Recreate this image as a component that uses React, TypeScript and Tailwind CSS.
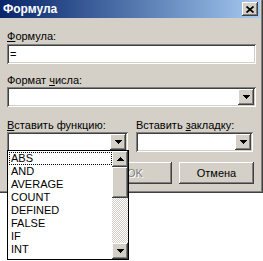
import React from 'react';

const raised =
  'bg-[#d4d0c8] shadow-[inset_-1px_-1px_0_#404040,inset_1px_1px_0_#fff,inset_-2px_-2px_0_#808080,inset_2px_2px_0_#d4d0c8]';
const sunken =
  'bg-white shadow-[inset_1px_1px_0_#808080,inset_-1px_-1px_0_#fff,inset_2px_2px_0_#404040,inset_-2px_-2px_0_#d4d0c8]';

const Arrow: React.FC<{ up?: boolean }> = ({ up }) => (
  <svg width="7" height="4" viewBox="0 0 7 4" shapeRendering="crispEdges">
    <polygon points={up ? '3.5,0 7,4 0,4' : '0,0 7,0 3.5,4'} fill="#000" />
  </svg>
);

const ArrowButton: React.FC<{ up?: boolean }> = ({ up }) => (
  <div className={`w-[16px] h-[16px] flex items-center justify-center ${raised}`}>
    <Arrow up={up} />
  </div>
);

const Combo: React.FC<{ className?: string }> = ({ className }) => (
  <div className={`h-[20px] p-[2px] flex justify-end ${sunken} ${className ?? ''}`}>
    <ArrowButton />
  </div>
);

const functions = ['ABS', 'AND', 'AVERAGE', 'COUNT', 'DEFINED', 'FALSE', 'IF', 'INT'];

export default function App() {
  return (
    <div className="w-[263px] h-[261px] bg-white relative overflow-hidden font-['Liberation_Sans',Arial,sans-serif] text-[11px] text-black">
      <div className="w-[263px] h-[193px] bg-[#d4d0c8] pr-[3px] shadow-[inset_-1px_-1px_0_#404040,inset_-2px_-2px_0_#808080]">
        {/* Title bar */}
        <div className="h-[18px] bg-gradient-to-r from-[#0a246a] to-[#a6caf0] flex items-center justify-between pl-[3px] pr-[2px]">
          <span className="font-bold text-white text-[12px] leading-[18px]">Формула</span>
          <div className={`w-[16px] h-[14px] flex items-center justify-center ${raised}`}>
            <svg width="8" height="7" viewBox="0 0 8 7">
              <path d="M0.5 0.5 L7.5 6.5 M7.5 0.5 L0.5 6.5" stroke="#000" strokeWidth="1.7" />
            </svg>
          </div>
        </div>

        <div className="pl-[7px] pt-[11px]">
          <div className="h-[15px] leading-[15px]">
            <span className="underline">Ф</span>ормула:
          </div>
          <div className={`w-[249px] h-[20px] px-[3px] flex items-center ${sunken}`}>=</div>

          <div className="mt-[9px] h-[14px] leading-[14px]">
            Формат <span className="underline">ч</span>исла:
          </div>
          <Combo className="w-[249px]" />

          <div className="mt-[11px] flex">
            <div className="w-[121px]">
              <div className="h-[14px] leading-[14px]">
                <span className="underline">В</span>ставить функцию:
              </div>
              <Combo />
            </div>
            <div className="ml-[8px] w-[117px]">
              <div className="h-[14px] leading-[14px]">
                Вставить <span className="underline">з</span>акладку:
              </div>
              <Combo />
            </div>
          </div>

          <div className="mt-[10px] pl-[91px] flex gap-[7px]">
            <div className={`w-[74px] h-[22px] flex items-center justify-center text-[#808080] [text-shadow:1px_1px_0_#fff] ${raised}`}>
              OK
            </div>
            <div className={`w-[75px] h-[22px] flex items-center justify-center ${raised}`}>
              Отмена
            </div>
          </div>
        </div>
      </div>

      {/* Dropped-down function list */}
      <div className="absolute left-[7px] top-[150px] w-[122px] h-[110px] bg-white border border-black flex">
        <div className="flex-1 pt-[1px] pl-[1px]">
          {functions.map((f, i) => (
            <div
              key={f}
              className={`h-[13px] leading-[11px] pl-[1px] border border-dotted ${i === 0 ? 'border-black' : 'border-transparent'}`}
            >
              {f}
            </div>
          ))}
        </div>
        <div className="w-[16px] flex flex-col">
          <ArrowButton up />
          <div className={`h-[31px] ${raised}`} />
          <div className="flex-1 bg-[repeating-conic-gradient(#d4d0c8_0_25%,#fff_0_50%)] bg-[length:2px_2px]" />
          <ArrowButton />
        </div>
      </div>
    </div>
  );
}
